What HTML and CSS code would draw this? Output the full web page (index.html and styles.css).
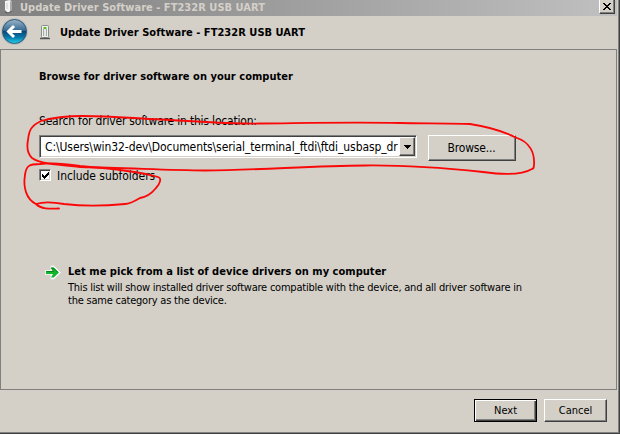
FILE: index.html
```
<!DOCTYPE html>
<html lang="en">
<head>
<meta charset="utf-8">
<title>Update Driver Software</title>
<link rel="stylesheet" href="styles.css">
</head>
<body>
<div class="window">
  <div class="titlebar">
    <svg class="title-icon" width="12" height="14" viewBox="0 0 12 14"><path d="M2 1l5-1 2 2v9l-4 2-3-3z" fill="#f4f4f4"/><path d="M7 1l2 1v9l-2 1z" fill="#aaa"/><path d="M4 3v6" stroke="#ccc"/><path d="M2 12l3 1 4-2" stroke="#555" fill="none"/></svg>
    <span class="title-text">Update Driver Software - FT232R USB UART</span>
    <span class="close"><svg width="8" height="7" viewBox="0 0 8 7" shape-rendering="crispEdges"><path d="M0 0h2v1h1v1h2V1h1V0h2v1H7v1H6v1H5v1h1v1h1v1h1v1H6V6H5V5H3v1H2v1H0V6h1V5h1V4h1V3H2V2H1V1H0z" fill="#000"/></svg></span>
  </div>
  <div class="header">
    <svg class="back" width="28" height="28" viewBox="0 0 28 28">
      <defs>
        <linearGradient id="orb" x1="0" y1="0" x2="0" y2="1"><stop offset="0" stop-color="#9cb4c7"/><stop offset=".45" stop-color="#386c94"/><stop offset=".5" stop-color="#0c4777"/><stop offset=".75" stop-color="#087cac"/><stop offset="1" stop-color="#25d5ee"/></linearGradient>
      </defs>
      <circle cx="13.500" cy="13.500" r="13.300" fill="#b7bbbd"/>
      <circle cx="13.500" cy="13.500" r="12" fill="url(#orb)" stroke="#315b79"/>
      <path d="M20.500 13.500H8M13 8l-5.500 5.500L13 19" fill="none" stroke="#fff" stroke-width="3"/>
    </svg>
    <svg class="device" width="10" height="15" viewBox="0 0 10 15"><rect x="1.500" y=".5" width="7" height="12" rx="1" fill="#f1f3f1" stroke="#8a8d8a"/><path d="M3.500 4v7M6.500 4v7" stroke="#a5aaa5"/><path d="M3.500 3h3" stroke="#58bf22" stroke-width="2"/><path d="M5 4v8" stroke="#d5dbd5"/><path d="M0 13.500h10" stroke="#555" stroke-width="1.500"/></svg>
    <span class="header-text">Update Driver Software - FT232R USB UART</span>
  </div>
  <div class="panel">
    <div class="heading"><span>Browse for driver software on your computer</span></div>
    <div class="label"><span>Search for driver software in this location:</span></div>
    <div class="row">
      <div class="combo">
        <div class="path"><span>C:\Users\win32-dev\Documents\serial_terminal_ftdi\ftdi_usbasp_dr</span></div>
        <div class="drop"><svg width="7" height="4" viewBox="0 0 7 4" shape-rendering="crispEdges"><path d="M0 0h7v1H6v1H5v1H4v1H3V3H2V2H1V1H0z"/></svg></div>
      </div>
      <div class="btn browse"><span>Browse...</span></div>
    </div>
    <div class="check-row">
      <div class="check"><svg width="7" height="7" viewBox="0 0 7 7" shape-rendering="crispEdges"><path d="M0 2h1v1h1v1h1V3h1V2h1V1h1V0h1v3H6v1H5v1H4v1H3v1H2V6H1V5H0z"/></svg></div>
      <span class="check-text">Include subfolders</span>
    </div>
    <div class="pick">
      <svg class="arrow" width="16" height="15" viewBox="0 0 16 15"><path d="M.5 5.500H6V1h3L15.500 7.500 9 14H6V9.500H.5z" fill="#fff" stroke="#eee"/><path d="M1 6h7L6 2.500h2.700L14 7.500l-5.300 5H6L8 9H1z" fill="#12b52c"/><path d="M1.500 6.500h7L6.500 3h2l4 4" fill="none" stroke="#08851c"/></svg>
      <div class="pick-body">
        <div class="pick-title"><span>Let me pick from a list of device drivers on my computer</span></div>
        <div class="desc"><span>This list will show installed driver software compatible with the device, and all driver software in</span></div>
        <div class="desc"><span>the same category as the device.</span></div>
      </div>
    </div>
  </div>
  <div class="footer">
    <div class="btn next"><span>Next</span></div>
    <div class="btn cancel"><span>Cancel</span></div>
  </div>
  <svg class="ink" width="620" height="435" viewBox="0 0 620 435">
    <path d="M41 121C55 117 66 116 83 116C110 116 130 118 160 119.500C195 121 225 124 260 123.500C310 123 350 122 400 123C425 123.500 450 123 470 124C490 127 503 131 517 138C529 142 535 152 534 165Q534 169 532 169C522 175 504 175 483 172C445 168 410 165 365 165.500C310 166 260 170 205 170.500C165 170 130 168 80 167C60 165 40 164 32 158C26 152 27 145 28 140C29 130 31 126 41 121"/>
    <path d="M158 177C162 178 160 184 156 188C152 193 147 197 140 198C135 201 130 204 125 204C105 206 80 206 64 204C53 202 42 202 36 204C26 199 23 187 25 175C26 166 29 164 40 164C55 162 68 164 80 166C105 168 137 171 158 177M36 204C41 209 49 209 59 208.500"/>
  </svg>
</div>
</body>
</html>
```
FILE: styles.css
```
* { box-sizing: border-box; }
body { margin: 0; background: #fff; }
.window {
  position: relative; width: 620px; height: 434px; overflow: hidden;
  background: #d4d0c8; border-right: 1px solid #404040; border-bottom: 1px solid #404040;
  box-shadow: inset -1px -1px #808080;
  font: 11px/14px "DejaVu Sans Condensed", "DejaVu Sans", sans-serif; color: #000;
  font-stretch: condensed; white-space: nowrap;
}
.titlebar {
  display: flex; height: 16px; width: 617px; padding-left: 3px;
  background: linear-gradient(90deg, #808080, #c0c0c0);
}
.title-icon { margin-right: 5px; }
.title-text { color: #d4d0c8; font-weight: bold; letter-spacing: .03px; margin-top: 1px; }
.close {
  display: flex; justify-content: center; width: 16px; height: 14px; padding-top: 3px; margin: 0 2px 0 auto;
  background: #d4d0c8; border: solid; border-width: 0 1px 1px 1px; border-color: #fff #404040 #404040 #fff;
  box-shadow: inset -1px -1px #808080;
}
.header { display: flex; height: 33px; align-items: flex-start; padding: 2px 0 0 1px; }
.device { margin: 7px 0 0 11px; }
.header-text { margin: 8px 0 0 10px; font-weight: bold; letter-spacing: .03px; }
.panel { width: 617px; height: 341px; border: 1px solid #808080; padding: 20px 0 0 38px; }
.heading { height: 14px; font-weight: bold; letter-spacing: .03px; }
.label { height: 14px; margin-top: 30px; font-size: 12px; letter-spacing: -.2px; }
.row { display: flex; margin-top: 7px; gap: 11px; }
.combo {
  display: flex; width: 378px; height: 23px; background: #fff;
  border: 1px solid; border-color: #808080 #fff #fff #808080;
  box-shadow: inset 1px 1px #404040, inset -1px -1px #d4d0c8; padding: 1px;
}
.path { width: 358px; padding: 3px 0 0 4px; overflow: hidden; font-size: 12px; letter-spacing: -.09px; }
.drop {
  display: flex; align-items: center; justify-content: center; width: 16px; height: 19px; background: #d4d0c8;
  border: 1px solid; border-color: #fff #404040 #404040 #fff; box-shadow: inset -1px -1px #808080;
}
.btn {
  display: flex; align-items: center; justify-content: center; border: 1px solid;
  border-color: #fff #404040 #404040 #fff; box-shadow: inset -1px -1px #808080;
}
.browse { width: 88px; height: 26px; font-size: 12px; letter-spacing: -.2px; padding-right: 1px; }
.check-row { display: flex; margin-top: 8px; }
.check {
  display: flex; align-items: center; justify-content: center; width: 12px; height: 12px; background: #fff;
  border: 1px solid; border-color: #808080 #fff #fff #808080; box-shadow: inset 1px 1px #404040, inset -1px -1px #d4d0c8;
}
.check-text { margin-left: 6px; font-size: 12px; letter-spacing: -.05px; }
.pick { display: flex; margin: 82px 0 0 6px; }
.arrow { margin-right: 7px; }
.pick-title { font-weight: bold; height: 15px; letter-spacing: .03px; }
.desc { height: 13px; line-height: 15px; letter-spacing: -.225px; }
.footer { display: flex; justify-content: flex-end; gap: 7px; padding: 9px 12px 0 0; }
.next { width: 63px; height: 23px; border-color: #000; box-shadow: inset 1px 1px #fff, inset -1px -1px #404040, inset -2px -2px #808080; }
.cancel { width: 63px; height: 23px; }
.ink { position: absolute; left: 0; top: 0; fill: none; stroke: #fa0808; stroke-width: 1.8; stroke-linejoin: round; stroke-linecap: round; }
```
